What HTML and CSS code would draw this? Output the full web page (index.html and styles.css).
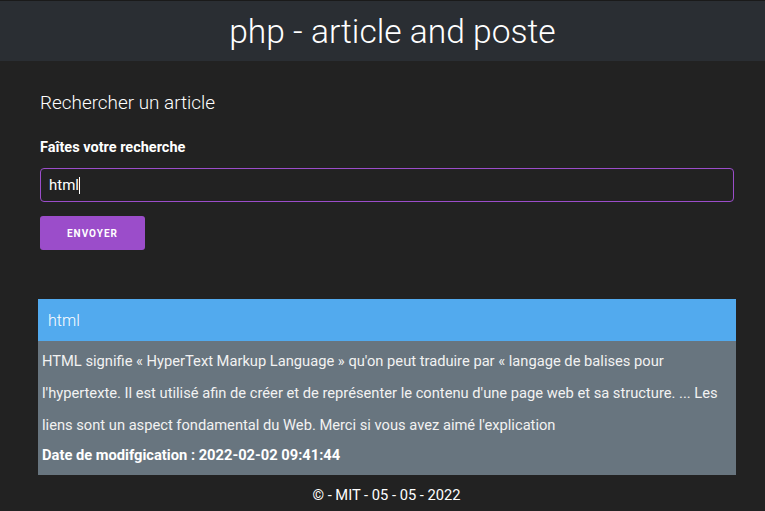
FILE: index.html
```html
<!DOCTYPE html>
<html lang="fr">
<head>
<meta charset="utf-8">
<title>php - article and poste</title>
<link rel="stylesheet" href="styles.css">
</head>
<body>
<header class="topbar">
  <h1 class="site-title">php - article and poste</h1>
</header>
<main class="content">
  <section class="search">
    <h2 class="search-title">Rechercher un article</h2>
    <form class="search-form">
      <label class="search-label" for="q">Faîtes votre recherche</label>
      <div class="search-field">
        <input id="q" class="search-input" type="text" value="html">
        <span class="caret"></span>
      </div>
      <button class="btn" type="button">Envoyer</button>
    </form>
  </section>
  <article class="card">
    <div class="card-head">html</div>
    <div class="card-body">
      <p class="card-text">HTML signifie « HyperText Markup Language » qu'on peut traduire par « langage de balises pour l'hypertexte. Il est utilisé afin de créer et de représenter le contenu d'une page web et sa structure. ... Les liens sont un aspect fondamental du Web. Merci si vous avez aimé l'explication</p>
      <p class="card-date">Date de modifgication : 2022-02-02 09:41:44</p>
    </div>
  </article>
</main>
<footer class="footer">© - MIT - 05 - 05 - 2022</footer>
</body>
</html>
```
FILE: styles.css
```css
* { box-sizing: border-box; }
html, body { margin: 0; padding: 0; }
body {
  background: #222222;
  color: #ffffff;
  font-family: Roboto, "Liberation Sans", sans-serif;
  min-height: 511px;
  border-top: 1px solid #1a1a1a;
}
.topbar {
  background: #2a2e33;
  height: 60px;
  display: flex;
  align-items: center;
  justify-content: center;
}
.site-title {
  margin: 0;
  font-weight: 300;
  font-size: 33.6px;
  line-height: 1;
  color: #ffffff;
  position: relative;
  left: 10px;
  top: 1px;
}
.content {
  padding: 0 29px 0 38px;
}
.search {
  padding: 28px 2px 0 2px;
}
.search-title {
  margin: 0;
  font-weight: 300;
  font-size: 18.9px;
  line-height: 28px;
}
.search-form {
  display: flex;
  flex-direction: column;
  align-items: flex-start;
  margin-top: 22px;
}
.search-label {
  font-weight: 700;
  font-size: 14.5px;
  line-height: 18px;
}
.search-field {
  position: relative;
  width: 100%;
  margin-top: 11px;
}
.search-input {
  display: block;
  width: 100%;
  height: 34px;
  background: transparent;
  border: 1px solid #9b4dca;
  border-radius: 4px;
  color: #ffffff;
  font-family: Roboto, "Liberation Sans", sans-serif;
  font-size: 15px;
  padding: 0 8px;
  outline: none;
}
.caret {
  position: absolute;
  left: 39px;
  top: 9px;
  width: 1px;
  height: 17px;
  background: #ffffff;
}
.btn {
  margin-top: 14px;
  height: 34px;
  width: 105px;
  background: #9b4dca;
  border: 0;
  border-radius: 3px;
  color: #ffffff;
  font-family: Roboto, "Liberation Sans", sans-serif;
  font-weight: 700;
  font-size: 10px;
  letter-spacing: 1px;
  text-transform: uppercase;
}
.card {
  margin-top: 49px;
}
.card-head {
  background: #52aaee;
  height: 42px;
  display: flex;
  align-items: center;
  padding: 0 10px;
  font-weight: 300;
  font-size: 16px;
}
.card-body {
  background: #68757f;
  padding: 4px 5px 6px 4px;
}
.card-text {
  margin: 0;
  font-size: 14.7px;
  line-height: 32px;
  color: #f2f2f2;
}
.card-date {
  margin: 0;
  font-weight: 700;
  font-size: 14.7px;
  line-height: 28px;
}
.footer {
  text-align: center;
  font-size: 14.7px;
  font-weight: 400;
  line-height: 20px;
  padding-top: 10px;
  padding-left: 8px;
}
```
